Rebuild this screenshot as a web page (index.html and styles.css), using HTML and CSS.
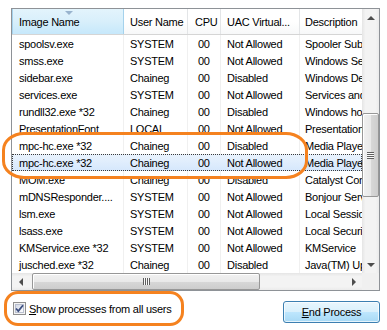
FILE: index.html
```html
<!DOCTYPE html>
<html lang="en">
<head>
    <meta charset="UTF-8">
    <meta name="viewport" content="width=device-width, initial-scale=1.0">
    <title>Processes</title>
    <link rel="stylesheet" href="styles.css">
</head>
<body>
    <div class="window">
        <div class="listview">
            <div class="list-main">
                <div class="header">
                    <div class="hcell col1 hot"><span class="sort-arrow"></span>Image Name</div>
                    <div class="hcell col2">User Name</div>
                    <div class="hcell col3">CPU</div>
                    <div class="hcell col4">UAC Virtual...</div>
                    <div class="hcell col5">Description</div>
                </div>
                <div class="row"><div class="cell col1">spoolsv.exe</div><div class="cell col2">SYSTEM</div><div class="cell col3">00</div><div class="cell col4">Not Allowed</div><div class="cell col5">Spooler SubSystem App</div></div>
                <div class="row"><div class="cell col1">smss.exe</div><div class="cell col2">SYSTEM</div><div class="cell col3">00</div><div class="cell col4">Not Allowed</div><div class="cell col5">Windows Session Manager</div></div>
                <div class="row"><div class="cell col1">sidebar.exe</div><div class="cell col2">Chaineg</div><div class="cell col3">00</div><div class="cell col4">Disabled</div><div class="cell col5">Windows Desktop Gadgets</div></div>
                <div class="row"><div class="cell col1">services.exe</div><div class="cell col2">SYSTEM</div><div class="cell col3">00</div><div class="cell col4">Not Allowed</div><div class="cell col5">Services and Controller app</div></div>
                <div class="row"><div class="cell col1">rundll32.exe *32</div><div class="cell col2">Chaineg</div><div class="cell col3">00</div><div class="cell col4">Disabled</div><div class="cell col5">Windows host process</div></div>
                <div class="row"><div class="cell col1">PresentationFont</div><div class="cell col2">LOCAL</div><div class="cell col3">00</div><div class="cell col4">Not Allowed</div><div class="cell col5">PresentationFontCache.exe</div></div>
                <div class="row"><div class="cell col1">mpc-hc.exe *32</div><div class="cell col2">Chaineg</div><div class="cell col3">00</div><div class="cell col4">Disabled</div><div class="cell col5">Media Player Classic</div></div>
                <div class="row selected"><div class="cell col1">mpc-hc.exe *32</div><div class="cell col2">Chaineg</div><div class="cell col3">00</div><div class="cell col4">Not Allowed</div><div class="cell col5">Media Player Classic</div></div>
                <div class="row"><div class="cell col1">MOM.exe</div><div class="cell col2">Chaineg</div><div class="cell col3">00</div><div class="cell col4">Disabled</div><div class="cell col5">Catalyst Control Center</div></div>
                <div class="row"><div class="cell col1">mDNSResponder....</div><div class="cell col2">SYSTEM</div><div class="cell col3">00</div><div class="cell col4">Not Allowed</div><div class="cell col5">Bonjour Service</div></div>
                <div class="row"><div class="cell col1">lsm.exe</div><div class="cell col2">SYSTEM</div><div class="cell col3">00</div><div class="cell col4">Not Allowed</div><div class="cell col5">Local Session Manager</div></div>
                <div class="row"><div class="cell col1">lsass.exe</div><div class="cell col2">SYSTEM</div><div class="cell col3">00</div><div class="cell col4">Not Allowed</div><div class="cell col5">Local Security Authority</div></div>
                <div class="row"><div class="cell col1">KMService.exe *32</div><div class="cell col2">SYSTEM</div><div class="cell col3">00</div><div class="cell col4">Not Allowed</div><div class="cell col5">KMService</div></div>
                <div class="row"><div class="cell col1">jusched.exe *32</div><div class="cell col2">Chaineg</div><div class="cell col3">00</div><div class="cell col4">Disabled</div><div class="cell col5">Java(TM) Update Scheduler</div></div>
            </div>
            <div class="vscroll">
                <div class="sbtn"><span class="arrow up"></span></div>
                <div class="vtrack">
                    <div class="vthumb"><span class="grip-v"></span></div>
                </div>
                <div class="sbtn"><span class="arrow down"></span></div>
            </div>
            <div class="hscroll">
                <div class="sbtn"><span class="arrow left"></span></div>
                <div class="htrack">
                    <div class="hthumb"><span class="grip-h"></span></div>
                </div>
                <div class="sbtn"><span class="arrow right"></span></div>
            </div>
            <div class="corner"></div>
        </div>

        <div class="footer">
            <label class="check">
                <svg class="checkbox" width="13" height="13" viewBox="0 0 13 13">
                    <defs>
                        <linearGradient id="boxfill" x1="0" y1="0" x2="1" y2="1">
                            <stop offset="0" stop-color="#cfd6e5"/>
                            <stop offset="1" stop-color="#ffffff"/>
                        </linearGradient>
                    </defs>
                    <rect x="0.5" y="0.5" width="12" height="12" fill="#f4f4f4" stroke="#8f8f8f"/>
                    <rect x="2.5" y="2.5" width="8" height="8" fill="url(#boxfill)" stroke="#b9bfcf"/>
                    <path d="M3 6.5 L5.3 9 L10 3.2" fill="none" stroke="#3d4f80" stroke-width="1.8"/>
                </svg>
                <span><u>S</u>how processes from all users</span>
            </label>
            <button class="end-btn"><u>E</u>nd Process</button>
        </div>

        <div class="mark mark-rows"></div>
        <div class="mark mark-check"></div>
    </div>
</body>
</html>
```

FILE: styles.css
```css
body {
    margin: 0;
    padding: 0;
    background-color: #fff;
    font-family: 'Liberation Sans', Arial, sans-serif;
    font-size: 11px;
    letter-spacing: -0.25px;
    color: #000;
}
.window {
    position: relative;
    width: 387px;
    height: 330px;
    padding: 8px 0 0 11px;
    box-sizing: border-box;
}
.listview {
    display: grid;
    grid-template-columns: 350px 17px;
    grid-template-rows: 264px 17px;
    width: 369px;
    border: 1px solid #8e9297;
    box-sizing: border-box;
    height: 283px;
}
.list-main {
    overflow: hidden;
    white-space: nowrap;
}
.header {
    display: grid;
    grid-template-columns: 112px 64px 33px 79px 62px;
    height: 25px;
    border-bottom: 1px solid #d5d5d5;
    background: linear-gradient(#ffffff, #ffffff 50%, #f7f8f9);
}
.hcell {
    position: relative;
    display: flex;
    align-items: center;
    border-right: 1px solid #e3e5e7;
    padding-left: 6px;
    overflow: hidden;
}
.hcell.hot {
    background: linear-gradient(#e3f4fc, #d8effb 50%, #c6e8fb);
    border-left: 1px solid #a5d2ec;
    border-right: 1px solid #a5d2ec;
    padding-left: 6px;
}
.sort-arrow {
    position: absolute;
    top: 2px;
    left: 52px;
    border-top: 4px solid #99b4ce;
    border-left: 4px solid transparent;
    border-right: 4px solid transparent;
}
.row {
    display: grid;
    grid-template-columns: 112px 64px 33px 79px 62px;
    height: 17px;
    box-sizing: border-box;
}
.cell {
    display: flex;
    align-items: center;
    border-right: 1px solid #f0f0f0;
    padding-left: 6px;
    overflow: hidden;
}
.col1 {
    padding-left: 7px;
}
.cell.col3 {
    padding-left: 10px;
}
.hcell.col3 {
    padding-left: 7px;
}
.col5 {
    padding-left: 5px;
    border-right: none;
}
.hcell.col5 {
    padding-left: 5px;
    border-right: none;
}
.row.selected {
    outline: 1px dotted #3a3a3a;
    outline-offset: -1px;
    background: linear-gradient(#eaf3fd, #d5e7fc);
}
.row.selected .cell {
    border-right-color: transparent;
}

/* scrollbars */
.vscroll {
    display: flex;
    flex-direction: column;
    background: linear-gradient(to right, #e5e5e5, #f3f3f3 20%, #f3f3f3 80%, #ebebeb);
}
.hscroll {
    display: flex;
    background: linear-gradient(#e5e5e5, #f3f3f3 20%, #f3f3f3 80%, #ebebeb);
}
.corner {
    background-color: #f0f0f0;
}
.sbtn {
    flex: 0 0 17px;
    height: 17px;
    display: flex;
    align-items: center;
    justify-content: center;
}
.vtrack, .htrack {
    flex: 1;
    position: relative;
}
.vthumb {
    position: absolute;
    left: 0;
    right: 0;
    top: 87px;
    height: 84px;
    border: 1px solid #979797;
    border-radius: 2px;
    background: linear-gradient(to right, #f1f1f1, #e9e9e9 50%, #d8d8d8 51%, #cdcdcd);
    box-shadow: inset 1px 1px 0 #fff;
    display: flex;
    align-items: center;
    justify-content: center;
    box-sizing: border-box;
}
.hthumb {
    position: absolute;
    top: 0;
    bottom: 0;
    left: 3px;
    width: 228px;
    border: 1px solid #979797;
    border-radius: 2px;
    background: linear-gradient(#f1f1f1, #e9e9e9 50%, #d8d8d8 51%, #cdcdcd);
    box-shadow: inset 1px 1px 0 #fff;
    display: flex;
    align-items: center;
    justify-content: center;
    box-sizing: border-box;
}
.grip-v {
    width: 7px;
    height: 7px;
    background: repeating-linear-gradient(#5f5f5f 0 1px, #fafafa 1px 2px);
}
.grip-h {
    width: 7px;
    height: 7px;
    background: repeating-linear-gradient(to right, #5f5f5f 0 1px, #fafafa 1px 2px);
}
.arrow {
    width: 0;
    height: 0;
}
.arrow.up {
    border-bottom: 4px solid #4d4d4d;
    border-left: 4px solid transparent;
    border-right: 4px solid transparent;
}
.arrow.down {
    border-top: 4px solid #4d4d4d;
    border-left: 4px solid transparent;
    border-right: 4px solid transparent;
}
.arrow.left {
    border-right: 4px solid #4d4d4d;
    border-top: 4px solid transparent;
    border-bottom: 4px solid transparent;
}
.arrow.right {
    border-left: 4px solid #4d4d4d;
    border-top: 4px solid transparent;
    border-bottom: 4px solid transparent;
}

/* bottom bar */
.footer {
    display: flex;
    justify-content: space-between;
    align-items: flex-start;
    margin-top: 10px;
    width: 367px;
    padding-left: 2px;
}
.check {
    display: flex;
    align-items: center;
    gap: 3px;
    margin-top: 1px;
    height: 13px;
}
.checkbox {
    display: block;
}
.end-btn {
    width: 97px;
    height: 22px;
    padding: 0;
    font-family: inherit;
    font-size: 11px;
    letter-spacing: -0.25px;
    color: #000;
    border: 1px solid #3c7fb1;
    border-radius: 3px;
    background: linear-gradient(#e9f6fd, #d9f0fc 50%, #bee6fd 51%, #a7d9f5);
    box-shadow: inset 0 0 0 1px rgba(255, 255, 255, 0.7);
}

/* annotation marks */
.mark {
    position: absolute;
    border: 3px solid #f5821f;
    box-sizing: border-box;
}
.mark-rows {
    left: 2px;
    top: 132px;
    width: 306px;
    height: 47px;
    border-radius: 22px / 18px;
}
.mark-check {
    left: 4px;
    top: 291px;
    width: 180px;
    height: 35px;
    border-radius: 14px;
}
```
